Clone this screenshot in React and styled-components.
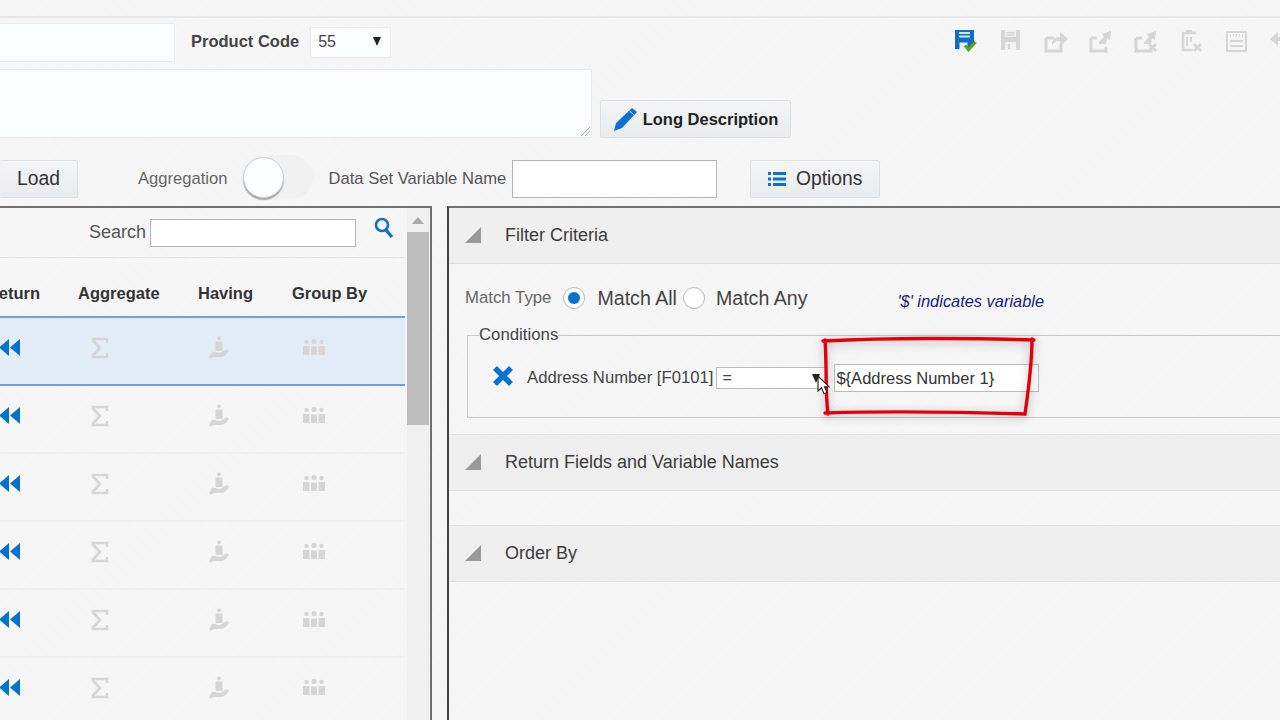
import styled, { createGlobalStyle } from "styled-components";

const GlobalStyle = createGlobalStyle`
  html, body { margin: 0; padding: 0; }
  body { font-family: "Liberation Sans", Arial, sans-serif; color: #333; }
`;

const Page = styled.div`
  position: relative;
  width: 1280px;
  height: 720px;
  overflow: hidden;
  box-sizing: border-box;
  padding-top: 16px;
  display: flex;
  flex-direction: column;
  background: repeating-linear-gradient(135deg, #f8f8f8 0 1px, #f5f5f5 1px 3px);
`;

const TopRule = styled.div`
  height: 2px;
  background: #e6e6e6;
`;

const TopRow = styled.div`
  display: flex;
  align-items: center;
  height: 39px;
  margin-top: 5px;
`;

const FaintInput = styled.div`
  box-sizing: border-box;
  width: ${(p) => p.$w}px;
  height: ${(p) => p.$h}px;
  background: #fbfcfd;
  border: 1px solid #ebebeb;
  border-left: none;
  border-radius: 0 2px 2px 0;
  position: relative;
`;

const ProductLabel = styled.span`
  margin-left: 16px;
  padding-bottom: 2px;
  font-size: 16.5px;
  font-weight: bold;
  color: #444;
`;

const ProductSelect = styled.div`
  box-sizing: border-box;
  display: flex;
  align-items: center;
  justify-content: space-between;
  width: 81px;
  height: 31px;
  margin-left: 11px;
  padding: 0 9px 2px 7px;
  background: #fbfcfd;
  border: 1px solid #ebebeb;
  border-radius: 2px;
  font-size: 16px;
  color: #444;
`;

const Arrow = styled.i`
  width: 0;
  height: 0;
  border-left: 4px solid transparent;
  border-right: 4px solid transparent;
  border-top: 9px solid #222;
`;

const Toolbar = styled.div`
  display: flex;
  gap: 21px;
  margin-left: auto;
  margin-right: -13px;
  margin-top: -3px;
`;

const ToolIcon = styled.svg`
  width: 24px;
  height: 24px;
  flex: none;
`;

const DescRow = styled.div`
  display: flex;
  align-items: flex-end;
  gap: 8px;
  margin-top: 7px;
`;

const Grip = styled.svg`
  position: absolute;
  right: 1px;
  bottom: 1px;
  width: 10px;
  height: 10px;
`;

const ActionButton = styled.button`
  box-sizing: border-box;
  display: flex;
  align-items: center;
  justify-content: center;
  flex: none;
  gap: ${(p) => p.$gap || 5}px;
  width: ${(p) => p.$w}px;
  height: 38px;
  margin-left: ${(p) => p.$ml || 0}px;
  padding: 0;
  background: linear-gradient(#f4f5f6, #e9ebed);
  border: 1px solid #dcdfe2;
  border-radius: 2px;
  font-family: inherit;
  font-size: ${(p) => p.$size || 19.3}px;
  font-weight: ${(p) => (p.$bold ? "bold" : "normal")};
  color: ${(p) => (p.$bold ? "#222" : "#333")};
`;

const LoadButton = styled(ActionButton)`
  border-left: none;
  justify-content: flex-end;
  padding-right: 17px;
`;

const ControlRow = styled.div`
  display: flex;
  align-items: center;
  height: 44px;
  margin-top: 17px;
  ${ActionButton} {
    margin-top: 4px;
  }
`;

const ControlLabel = styled.span`
  font-size: 16.6px;
  padding-top: 3px;
  color: ${(p) => p.$color || "#666"};
  margin-left: ${(p) => p.$ml}px;
`;

const Toggle = styled.div`
  box-sizing: border-box;
  position: relative;
  width: 72px;
  height: 44px;
  margin-left: 13px;
  background: #f1f1f1;
  border-radius: 22px;
`;

const Knob = styled.div`
  position: absolute;
  left: 2px;
  top: 2px;
  box-sizing: border-box;
  width: 41px;
  height: 41px;
  border-radius: 50%;
  background: #fbfcfd;
  border: 1px solid #cfcfcf;
  box-shadow: 0 2px 1px #a9a9a9;
`;

const TextInput = styled.input`
  box-sizing: border-box;
  display: block;
  flex: none;
  width: ${(p) => p.$w}px;
  height: ${(p) => p.$h}px;
  margin-left: ${(p) => p.$ml || 0}px;
  margin-top: ${(p) => p.$mt || 0}px;
  padding: 0 1px;
  background: #fff;
  border: 1px solid ${(p) => p.$line || "#b5b5b5"};
  border-radius: 0;
  font-family: inherit;
  font-size: 16.5px;
  color: #333;
  outline: none;
`;

const Panels = styled.div`
  flex: 1;
  display: flex;
  gap: 15px;
  margin-top: 7px;
  min-height: 0;
`;

const LeftPanel = styled.section`
  box-sizing: border-box;
  display: flex;
  flex: none;
  width: 432px;
  border-top: 2px solid #6f6f6f;
  border-right: 2px solid #6f6f6f;
`;

const ListArea = styled.div`
  width: 405px;
  flex: none;
`;

const SearchRow = styled.div`
  box-sizing: border-box;
  display: flex;
  align-items: flex-start;
  height: 50px;
  padding: 11px 0 0 89px;
  border-bottom: 1px solid #e4e4e4;
`;

const SearchLabel = styled.label`
  font-size: 18px;
  line-height: 26px;
  color: #555;
`;

const SearchIcon = styled.svg`
  width: 20px;
  height: 24px;
  margin: -2px 0 0 18px;
`;

const Grid = styled.div`
  box-sizing: border-box;
  display: grid;
  grid-template-columns: 78px 120px 94px 113px;
  align-items: center;
`;

const HeadRow = styled(Grid)`
  height: 58px;
  padding-top: 13px;
  font-size: 16.5px;
  font-weight: bold;
  color: #333;
`;

const ReturnHead = styled.span`
  justify-self: end;
  margin-right: 38px;
  white-space: nowrap;
`;

const DataRow = styled(Grid)`
  height: ${(p) => (p.$selected ? 70 : 68)}px;
  padding-bottom: ${(p) => (p.$selected ? 7 : 6)}px;
  background: ${(p) => (p.$selected ? "#e3edf8" : "transparent")};
  border-top: ${(p) => (p.$selected ? "2px solid #6f9fdf" : "none")};
  border-bottom: 2px solid ${(p) => (p.$selected ? "#6f9fdf" : "#efefef")};
`;

const CellIcon = styled.svg`
  width: 22px;
  height: 24px;
  margin-left: ${(p) => p.$ml}px;
`;

const RewindIcon = styled(CellIcon)`
  justify-self: end;
  margin-right: 57px;
`;

const Scrollbar = styled.div`
  flex: 1;
  display: flex;
  flex-direction: column;
  margin-left: 2px;
  margin-right: 1px;
  background: #f0f0f0;
`;

const ScrollUp = styled.div`
  height: 24px;
  display: flex;
  justify-content: center;
  padding-top: 9px;
  box-sizing: border-box;
  i {
    width: 0;
    height: 0;
    border-left: 6px solid transparent;
    border-right: 6px solid transparent;
    border-bottom: 7px solid #aaa;
  }
`;

const ScrollThumb = styled.div`
  height: 193px;
  background: #bdbdbd;
`;

const RightPanel = styled.section`
  box-sizing: border-box;
  flex: 1;
  min-width: 0;
  overflow: hidden;
  border-top: 2px solid #6f6f6f;
  border-left: 2px solid #444;
`;

const SectionHead = styled.div`
  box-sizing: border-box;
  display: flex;
  align-items: center;
  height: ${(p) => p.$h}px;
  padding-left: 16px;
  padding-bottom: 1px;
  background: #efefef;
  border-top: ${(p) => (p.$first ? "none" : "1px solid #e2e2e2")};
  border-bottom: 1px solid #e0e0e0;
  font-size: 18px;
  color: #3c3c3c;
`;

const SectionGap = styled.div`
  height: 34px;
`;

const Corner = styled.i`
  width: 0;
  height: 0;
  margin-right: 24px;
  border-left: 16px solid transparent;
  border-bottom: 16px solid #999;
`;

const FilterBody = styled.div`
  box-sizing: border-box;
  height: 170px;
  padding: 22px 0 0 16px;
`;

const MatchRow = styled.div`
  display: flex;
  align-items: center;
  height: 24px;
`;

const MatchLabel = styled.span`
  font-size: 16.8px;
  color: #666;
  margin-right: 12px;
`;

const Radio = styled.span`
  box-sizing: border-box;
  display: inline-flex;
  align-items: center;
  justify-content: center;
  flex: none;
  width: 22px;
  height: 22px;
  border-radius: 50%;
  background: #fff;
  border: 1px solid #bbb;
  &::after {
    content: "";
    display: ${(p) => (p.$on ? "block" : "none")};
    width: 12px;
    height: 12px;
    border-radius: 50%;
    background: #0572ce;
  }
`;

const RadioText = styled.span`
  font-size: 19.6px;
  color: #444;
  margin: 0 ${(p) => p.$mr || 0}px 0 ${(p) => p.$ml || 12}px;
`;

const VariableHint = styled.em`
  font-size: 16.4px;
  color: #1c1c78;
  margin: 7px 0 0 90px;
`;

const Conditions = styled.fieldset`
  box-sizing: border-box;
  height: 93px;
  width: 900px;
  margin: 15px 0 0 2px;
  padding: 0 0 0 24px;
  border: 1px solid #c9c9c9;
`;

const ConditionsTitle = styled.legend`
  margin-left: -13px;
  padding: 0;
  font-size: 16.8px;
  color: #444;
`;

const ConditionRow = styled.div`
  display: flex;
  align-items: center;
  margin-top: 19px;
`;

const RemoveIcon = styled.svg`
  width: 22px;
  height: 22px;
  margin-top: -5px;
  flex: none;
`;

const FieldName = styled.span`
  margin-left: 13px;
  font-size: 16.7px;
  color: #444;
  white-space: nowrap;
`;

const OperatorSelect = styled.div`
  box-sizing: border-box;
  display: flex;
  align-items: center;
  justify-content: space-between;
  flex: none;
  width: 110px;
  height: 22px;
  margin-left: 3px;
  padding: 0 6px 0 5px;
  background: #fff;
  border: 1px solid #bbb;
  border-right: none;
  font-size: 16px;
  color: #444;
`;

const Annotation = styled.svg`
  position: absolute;
  left: 810px;
  top: 326px;
  width: 240px;
  height: 104px;
  overflow: visible;
  pointer-events: none;
`;

const Cursor = styled.svg`
  position: absolute;
  left: 817px;
  top: 375px;
  width: 13px;
  height: 21px;
`;

const gray = "#d6d6d6";

const SaveCheck = () => (
  <ToolIcon viewBox="0 0 24 24">
    <path d="M1 1h19v14l-4 2v3H1z" fill="#0f6fc6" />
    <path d="M5 3h11v2H5zM5 6.5h11v2H5z" fill="#cfe3f6" />
    <path d="M5.5 13.5h8v6.5h-8z" fill="#e8f1fa" />
    <path d="M11 16.500l3.500 4 7-7.500" fill="none" stroke="#58a618" strokeWidth="3.200" />
  </ToolIcon>
);

const SaveGray = () => (
  <ToolIcon viewBox="0 0 24 24">
    <path d="M2 1h19v20H2z" fill={gray} />
    <path d="M6 1h11v7H6zM6 13h11v8H6z" fill="#f3f3f3" />
    <path d="M7.500 3h8v1.500h-8zM7.500 5.500h8V7h-8z" fill={gray} />
    <path d="M9 15h2v5H9z" fill={gray} />
  </ToolIcon>
);

const ShareGray = () => (
  <ToolIcon viewBox="0 0 24 24">
    <path d="M2 9h8M2 9v13h15v-7" fill="none" stroke={gray} strokeWidth="3" />
    <path d="M8 16c0-6 3-8 8-8V3l8 7-8 7v-5c-4 0-6 1-8 4z" fill={gray} />
  </ToolIcon>
);

const ImportGray = ({ x }) => (
  <ToolIcon viewBox="0 0 24 24">
    <path d="M2 9h6M2 9v13h15v-4" fill="none" stroke={gray} strokeWidth="3" />
    <path d="M22 2l-9 3 2 3-5 5v2h7l1-6 3 2z" fill={gray} />
    {x && <path d="M15 15l7 7M22 15l-7 7" stroke={gray} strokeWidth="2.600" />}
  </ToolIcon>
);

const TrashGray = () => (
  <ToolIcon viewBox="0 0 24 24">
    <path d="M3 4h14M4 5v16h10" fill="none" stroke={gray} strokeWidth="2.600" />
    <path d="M7 1h6v3H7zM7 8h2v9H7zM11 8h2v5h-2z" fill={gray} />
    <path d="M15 15l7 7M22 15l-7 7" stroke={gray} strokeWidth="2.600" />
  </ToolIcon>
);

const FormGray = () => (
  <ToolIcon viewBox="0 0 24 24">
    <rect x="3" y="3" width="19" height="19" fill="none" stroke={gray} strokeWidth="2" />
    <path d="M6 5h1v3H6zM9 5h1v3H9zM12 5h1v3h-1zM15 5h1v3h-1zM18 5h1v3h-1z" fill={gray} />
    <path d="M6 11h13v2H6zM6 16h13v2H6z" fill={gray} />
  </ToolIcon>
);

const UndoGray = () => (
  <ToolIcon viewBox="0 0 24 24">
    <path d="M1 10l8-7v14z" fill={gray} />
    <path d="M8 10h10v8" fill="none" stroke={gray} strokeWidth="4" />
  </ToolIcon>
);

const Pencil = () => (
  <svg width="25" height="24" viewBox="0 0 25 24">
    <path d="M19 1l5 4L9 21l-8 3 2-8z" fill="#0b72d0" />
    <path d="M16.500 4l4.500 4" stroke="#e9ebed" strokeWidth="1" />
  </svg>
);

const ListIcon = () => (
  <svg width="18" height="16" viewBox="0 0 18 16">
    <path d="M0 1h3v3H0zM0 6.500h3v3H0zM0 12h3v3H0zM5 1h13v3H5zM5 6.500h13v3H5zM5 12h13v3H5z" fill="#0b72d0" />
  </svg>
);

const Rewind = () => (
  <RewindIcon $ml={0} viewBox="0 0 22 24">
    <path d="M10 3v17L0 11.500zM21 3v17l-10-8.500z" fill="#0572ce" />
  </RewindIcon>
);

const Sigma = () => (
  <CellIcon $ml={11} viewBox="0 0 22 24">
    <path d="M18 7V3H4v1.500L11 12 4 19.500V21h14v-4" fill="none" stroke={gray} strokeWidth="2.600" />
  </CellIcon>
);

const HandPerson = () => (
  <CellIcon $ml={10} viewBox="0 0 22 24">
    <circle cx="11" cy="2.500" r="2" fill={gray} />
    <path d="M7.500 5.500h7V15h-7z" fill={gray} />
    <path d="M1 21l3-5c3-1 5 1 8 1l7-4 2 2c-2 3-5 6-8 6H5l-2 2z" fill={gray} />
  </CellIcon>
);

const GroupPeople = () => (
  <CellIcon $ml={11} viewBox="0 0 22 24">
    <circle cx="11" cy="5.500" r="2.600" fill={gray} />
    <circle cx="3.500" cy="6" r="2.200" fill={gray} />
    <circle cx="18.500" cy="6" r="2.200" fill={gray} />
    <path d="M0 10h6.500v9H0zM8 10.500h6V19H8zM15.500 10H22v9h-6.500z" fill={gray} />
  </CellIcon>
);

const rows = [true, false, false, false, false, false];

const App = () => {
  return (
    <Page>
      <GlobalStyle />
      <TopRule />
      <TopRow>
        <FaintInput $w={175} $h={39} />
        <ProductLabel>Product Code</ProductLabel>
        <ProductSelect>
          55
          <Arrow />
        </ProductSelect>
        <Toolbar>
          <SaveCheck />
          <SaveGray />
          <ShareGray />
          <ImportGray />
          <ImportGray x />
          <TrashGray />
          <FormGray />
          <UndoGray />
        </Toolbar>
      </TopRow>

      <DescRow>
        <FaintInput $w={592} $h={69}>
          <Grip viewBox="0 0 10 10">
            <path d="M1 10l9-9M5 10l5-5" stroke="#999" strokeWidth="1" />
          </Grip>
        </FaintInput>
        <ActionButton $w={191} $size={16.5} $bold>
          <Pencil />
          Long Description
        </ActionButton>
      </DescRow>

      <ControlRow>
        <LoadButton $w={78}>Load</LoadButton>
        <ControlLabel $ml={60}>Aggregation</ControlLabel>
        <Toggle>
          <Knob />
        </Toggle>
        <ControlLabel $ml={16} $color="#555">Data Set Variable Name</ControlLabel>
        <TextInput $w={205} $h={38} $ml={6} $mt={4} readOnly />
        <ActionButton $w={130} $gap={10} $ml={33}>
          <ListIcon />
          Options
        </ActionButton>
      </ControlRow>

      <Panels>
        <LeftPanel>
          <ListArea>
            <SearchRow>
              <SearchLabel>Search</SearchLabel>
              <TextInput $w={206} $h={28} $ml={4} readOnly />
              <SearchIcon viewBox="0 0 20 24">
                <circle cx="8" cy="8" r="6" fill="none" stroke="#0b72d0" strokeWidth="2.600" />
                <path d="M12 13l6 7" stroke="#0b72d0" strokeWidth="3.400" />
              </SearchIcon>
            </SearchRow>
            <HeadRow>
              <ReturnHead>Return</ReturnHead>
              <span>Aggregate</span>
              <span>Having</span>
              <span>Group By</span>
            </HeadRow>
            {rows.map((selected, i) => (
              <DataRow key={i} $selected={selected}>
                <Rewind />
                <Sigma />
                <HandPerson />
                <GroupPeople />
              </DataRow>
            ))}
          </ListArea>
          <Scrollbar>
            <ScrollUp>
              <i />
            </ScrollUp>
            <ScrollThumb />
          </Scrollbar>
        </LeftPanel>

        <RightPanel>
          <SectionHead $first $h={56}>
            <Corner />
            Filter Criteria
          </SectionHead>
          <FilterBody>
            <MatchRow>
              <MatchLabel>Match Type</MatchLabel>
              <Radio $on />
              <RadioText $mr={6}>Match All</RadioText>
              <Radio />
              <RadioText $ml={11}>Match Any</RadioText>
              <VariableHint>'$' indicates variable</VariableHint>
            </MatchRow>
            <Conditions>
              <ConditionsTitle>Conditions</ConditionsTitle>
              <ConditionRow>
                <RemoveIcon viewBox="0 0 22 22">
                  <path d="M3 3l16 16M19 3L3 19" stroke="#0b72d0" strokeWidth="5.500" />
                </RemoveIcon>
                <FieldName>Address Number [F0101]</FieldName>
                <OperatorSelect>
                  =
                  <Arrow />
                </OperatorSelect>
                <TextInput $w={205} $h={28} $ml={8} $line="#bbb" readOnly value="${Address Number 1}" />
              </ConditionRow>
            </Conditions>
          </FilterBody>
          <SectionHead $h={57}>
            <Corner />
            Return Fields and Variable Names
          </SectionHead>
          <SectionGap />
          <SectionHead $h={57}>
            <Corner />
            Order By
          </SectionHead>
        </RightPanel>
      </Panels>

      <Annotation viewBox="0 0 240 104">
        <defs>
          <filter id="markShadow" x="-10%" y="-20%" width="120%" height="140%">
            <feDropShadow dx="0" dy="2" stdDeviation="5" floodColor="#000" floodOpacity="0.3" />
          </filter>
        </defs>
        <path
          d="M13 15C70 12 150 12 224 14M15 14C17 40 15 65 18 88M15 87C80 85 150 86 215 88C219 60 222 35 222 13"
          fill="none"
          stroke="#e2060f"
          strokeWidth="3.400"
          strokeLinecap="round"
          filter="url(#markShadow)"
        />
      </Annotation>

      <Cursor viewBox="0 0 13 21">
        <path d="M1 1v15l3.500-3.200 2.500 6 3-1.300-2.500-5.800H12z" fill="#fff" stroke="#222" strokeWidth="1.100" />
      </Cursor>
    </Page>
  );
};

export default App;
